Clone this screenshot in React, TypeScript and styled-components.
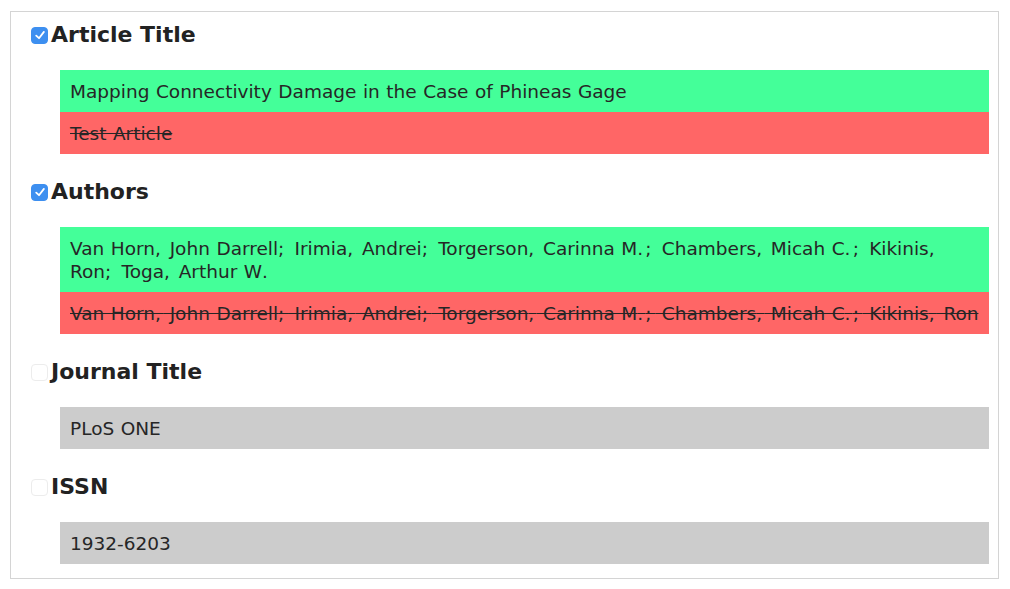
import styled, { createGlobalStyle } from "styled-components"

const GlobalStyle = createGlobalStyle`
  body {
    margin: 0;
    background: #fff;
    font-family: "DejaVu Sans", Verdana, sans-serif;
    color: #222;
  }
`

type Change = { kind: "added" | "removed" | "same"; text: string }

const fields: { label: string; checked: boolean; values: Change[] }[] = [
  {
    label: "Article Title",
    checked: true,
    values: [
      { kind: "added", text: "Mapping Connectivity Damage in the Case of Phineas Gage" },
      { kind: "removed", text: "Test Article" },
    ],
  },
  {
    label: "Authors",
    checked: true,
    values: [
      {
        kind: "added",
        text: "Van Horn, John Darrell; Irimia, Andrei; Torgerson, Carinna M.; Chambers, Micah C.; Kikinis, Ron; Toga, Arthur W.",
      },
      {
        kind: "removed",
        text: "Van Horn, John Darrell; Irimia, Andrei; Torgerson, Carinna M.; Chambers, Micah C.; Kikinis, Ron",
      },
    ],
  },
  {
    label: "Journal Title",
    checked: false,
    values: [{ kind: "same", text: "PLoS ONE" }],
  },
  {
    label: "ISSN",
    checked: false,
    values: [{ kind: "same", text: "1932-6203" }],
  },
]

const colors = {
  added: "#44ff99",
  removed: "#ff6666",
  same: "#cccccc",
}

// punctuation runs wider in the original face
const punctSpacing: Record<string, number> = { ",": 0.12, ".": 0.12, ";": 0.2 }

const Panel = styled.div`
  margin: 11px 11px 0 10px;
  border: 1px solid #d4d4d4;
  padding: 9px 9px 14px 20px;
  display: flex;
  flex-direction: column;
  gap: 24px;
`

const Field = styled.section`
  display: flex;
  flex-direction: column;
  gap: 23px;
`

const Heading = styled.label`
  display: flex;
  align-items: center;
  box-sizing: border-box;
  height: 26px;
  padding-top: 2px;
  font-size: 22px;
  font-weight: bold;
  line-height: 26px;
  color: #222;
`

const Box = styled.span<{ $checked: boolean }>`
  width: 17px;
  height: 17px;
  box-sizing: border-box;
  border-radius: 4px;
  margin-right: 3px;
  display: flex;
  align-items: center;
  justify-content: center;
  background: ${(p) => (p.$checked ? "#3d8ff0" : "#fff")};
  border: 1px solid ${(p) => (p.$checked ? "#3d8ff0" : "#ececec")};
`

const Values = styled.div`
  margin-left: 29px;
  display: flex;
  flex-direction: column;
`

const Value = styled.div<{ $kind: Change["kind"] }>`
  background: ${(p) => colors[p.$kind]};
  padding: 9.5px 10px;
  font-size: 18.5px;
  line-height: 23px;
  word-spacing: 0.034em;
  color: #262626;
  text-decoration: ${(p) => (p.$kind === "removed" ? "line-through" : "none")};
  white-space: ${(p) => (p.$kind === "removed" ? "nowrap" : "normal")};
  overflow: hidden;
`

const Punct = styled.span<{ $extra: number }>`
  letter-spacing: ${(p) => p.$extra}em;
`

const Check = () => (
  <svg width="12" height="12" viewBox="0 0 12 12">
    <path d="M2.2 6.6 L5 9.2 L9.9 2.9" fill="none" stroke="#fff" strokeWidth="1.8" strokeLinecap="round" strokeLinejoin="round" />
  </svg>
)

const spaced = (text: string) =>
  text.split(/([,;.])/).map((part, i) =>
    punctSpacing[part] ? (
      <Punct $extra={punctSpacing[part]} key={i}>
        {part}
      </Punct>
    ) : (
      part
    )
  )

const App = () => (
  <>
    <GlobalStyle />
    <Panel>
      {fields.map(({ label, checked, values }) => (
        <Field key={label}>
          <Heading>
            <Box $checked={checked}>{checked && <Check />}</Box>
            {label}
          </Heading>
          <Values>
            {values.map((v) => (
              <Value $kind={v.kind} key={v.kind}>
                {spaced(v.text)}
              </Value>
            ))}
          </Values>
        </Field>
      ))}
    </Panel>
  </>
)

export default App
